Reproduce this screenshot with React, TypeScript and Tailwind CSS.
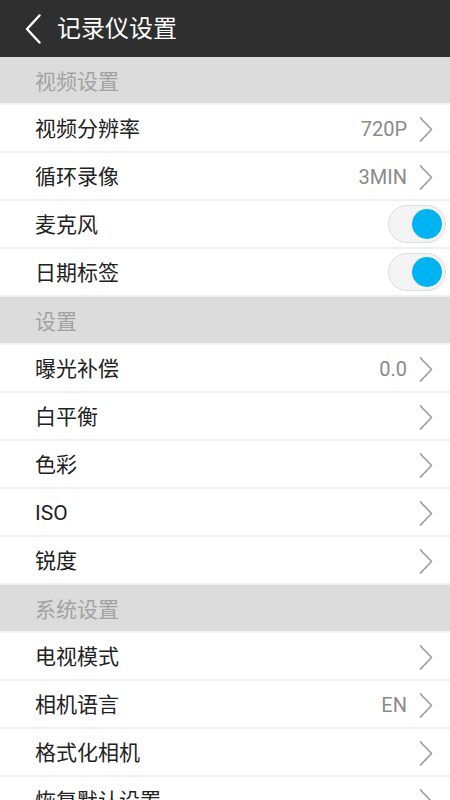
import React from "react";

const font = { fontFamily: 'Roboto, "Noto Sans CJK SC", sans-serif' };

function Chevron() {
  return (
    <svg width="14" height="25" viewBox="0 0 14 25" fill="none" className="shrink-0">
      <path d="M1.5 1 L12.5 12.5 L1.5 24" stroke="#9a9a9a" strokeWidth="1.6" strokeLinecap="round" strokeLinejoin="round" />
    </svg>
  );
}

function Toggle() {
  return (
    <div className="w-[58px] h-[38px] rounded-full bg-[#f4f4f4] border border-[#dedede] flex items-center justify-end pr-[3px] mr-[-13px]">
      <div className="w-[30px] h-[30px] rounded-full bg-[#02b3f1]" />
    </div>
  );
}

function Section({ title }: { title: string }) {
  return (
    <div className="h-[48px] bg-[#dcdcdc] flex items-center pl-[35px] text-[21px] text-[#a2a2a2] border-b-2 border-[#f3f3f3]">
      <span className="translate-y-[3px]">{title}</span>
    </div>
  );
}

function Row({ label, value, toggle }: { label: string; value?: string; toggle?: boolean }) {
  return (
    <div className="h-[48px] bg-white flex items-center pl-[35px] pr-[17px] border-b-2 border-[#efefef]">
      <div className="flex-1 text-[21px] text-[#222222] translate-y-[2px]">{label}</div>
      {toggle ? (
        <Toggle />
      ) : (
        <div className="flex items-center gap-[12px] translate-y-[1px]">
          {value && <span className="text-[20px] text-[#8a8a8a]">{value}</span>}
          <Chevron />
        </div>
      )}
    </div>
  );
}

export default function App() {
  return (
    <div className="w-[450px] h-[800px] overflow-hidden bg-white flex flex-col" style={font}>
      <div className="h-[57px] shrink-0 bg-[#2f2f2f] flex items-center pl-[25px]">
        <svg width="16" height="30" viewBox="0 0 16 30" fill="none">
          <path d="M14.5 1.5 L2 15 L14.5 28.5" stroke="#ffffff" strokeWidth="2.4" strokeLinecap="round" strokeLinejoin="round" />
        </svg>
        <div className="ml-[16px] text-[24px] text-white">记录仪设置</div>
      </div>
      <div className="flex flex-col shrink-0">
        <Section title="视频设置" />
        <Row label="视频分辨率" value="720P" />
        <Row label="循环录像" value="3MIN" />
        <Row label="麦克风" toggle />
        <Row label="日期标签" toggle />
        <Section title="设置" />
        <Row label="曝光补偿" value="0.0" />
        <Row label="白平衡" />
        <Row label="色彩" />
        <Row label="ISO" />
        <Row label="锐度" />
        <Section title="系统设置" />
        <Row label="电视模式" />
        <Row label="相机语言" value="EN" />
        <Row label="格式化相机" />
        <Row label="恢复默认设置" />
      </div>
    </div>
  );
}
